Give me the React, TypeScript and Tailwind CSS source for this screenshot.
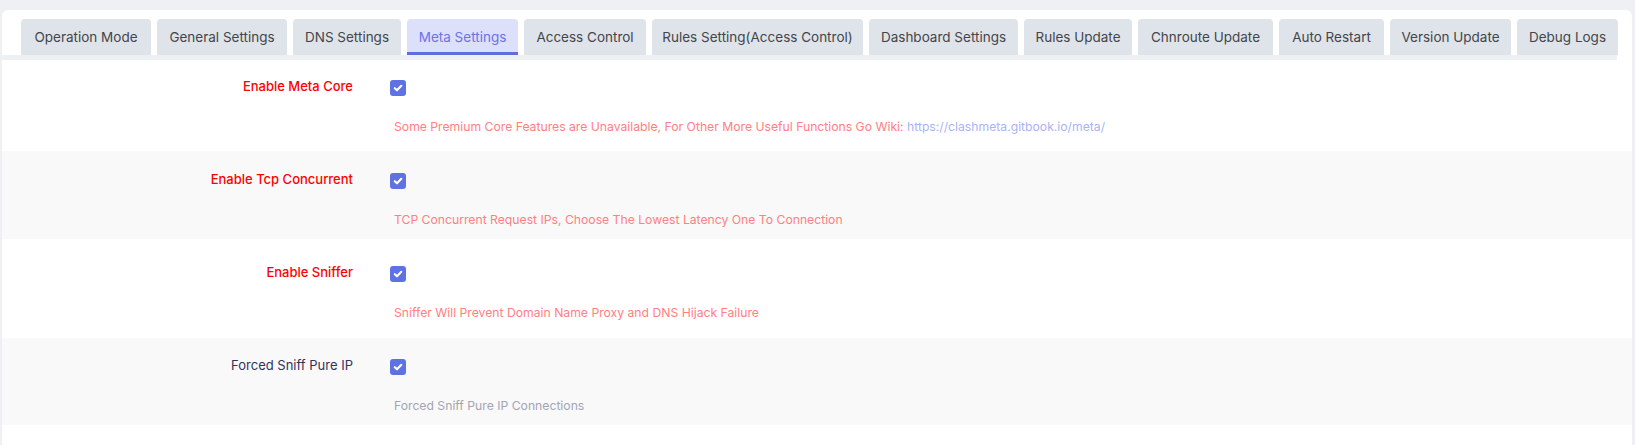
import React from 'react';

const tabs = [
  { name: 'Operation Mode', w: 'w-[130px]' },
  { name: 'General Settings', w: 'w-[130px]' },
  { name: 'DNS Settings', w: 'w-[108px]' },
  { name: 'Meta Settings', w: 'w-[111px]' },
  { name: 'Access Control', w: 'w-[122px]' },
  { name: 'Rules Setting(Access Control)', w: 'w-[211px]' },
  { name: 'Dashboard Settings', w: 'w-[149px]' },
  { name: 'Rules Update', w: 'w-[108px]' },
  { name: 'Chnroute Update', w: 'w-[135px]' },
  { name: 'Auto Restart', w: 'w-[105px]' },
  { name: 'Version Update', w: 'w-[121px]' },
  { name: 'Debug Logs', w: 'w-[101px]' },
];

function Check() {
  return (
    <span className="flex h-[16px] w-[16px] items-center justify-center rounded-[3px] bg-[#5e72e4]">
      <svg width="10" height="10" viewBox="0 0 10 10" fill="none">
        <path d="M1.8 5.2 L4 7.3 L8.3 2.8" stroke="white" strokeWidth="2.1" strokeLinecap="round" strokeLinejoin="round" />
      </svg>
    </span>
  );
}

type RowProps = {
  label: string;
  warn?: boolean;
  shade?: boolean;
  pad: string;
  children: React.ReactNode;
};

function Row({ label, warn, shade, pad, children }: RowProps) {
  return (
    <div className={`flex ${pad} ${shade ? 'bg-[#f9f9f9]' : 'bg-white'}`}>
      <div
        className={`-mt-[4px] w-[351px] shrink-0 text-right text-[13px] leading-5 ${
          warn ? 'font-medium text-[#ff0000]' : 'text-[#32325d]'
        }`}
      >
        {label}
      </div>
      <div className="pl-[37px]">
        <Check />
        <div className="mt-[22px] pl-[4px] text-[12.2px] leading-[18px]">{children}</div>
      </div>
    </div>
  );
}

export default function App() {
  return (
    <div className="min-h-[445px] bg-[#eff0f3] pl-[2px] pr-[3px] pt-[10px]" style={{ fontFamily: 'Inter, "Open Sans", sans-serif' }}>
      <div className="min-h-[435px] rounded-t-[6px] bg-white pt-[9px]">
        <div className="mr-[15px] border-b-[5px] border-[#eef1f4] pl-[19px]">
          <div className="flex gap-[6px]">
            {tabs.map((t) =>
              t.name === 'Meta Settings' ? (
                <div
                  key={t.name}
                  className={`flex h-[36px] shrink-0 items-center justify-center whitespace-nowrap rounded-t-[4px] border-b-[3px] border-[#5e6fe0] bg-[#dde0fb] pt-[3px] text-[13.5px] text-[#6b73e8] ${t.w}`}
                >
                  {t.name}
                </div>
              ) : (
                <div
                  key={t.name}
                  className={`flex h-[36px] shrink-0 items-center justify-center whitespace-nowrap rounded-t-[4px] bg-[#dfe4ea] text-[13.5px] text-[#44444c] ${t.w}`}
                >
                  {t.name}
                </div>
              ),
            )}
          </div>
        </div>

        <Row label="Enable Meta Core" warn pad="pt-[20px] pb-[15px]">
          <span className="text-[#ff8080]">
            Some Premium Core Features are Unavailable, For Other More Useful Functions Go Wiki:{' '}
          </span>
          <a className="text-[#aab3f3]">https://clashmeta.gitbook.io/meta/</a>
        </Row>
        <Row label="Enable Tcp Concurrent" warn shade pad="pt-[22px] pb-[10px]">
          <span className="text-[#ff8080]">TCP Concurrent Request IPs, Choose The Lowest Latency One To Connection</span>
        </Row>
        <Row label="Enable Sniffer" warn pad="pt-[27px] pb-[16px]">
          <span className="text-[#ff8080]">Sniffer Will Prevent Domain Name Proxy and DNS Hijack Failure</span>
        </Row>
        <Row label="Forced Sniff Pure IP" shade pad="pt-[21px] pb-[10px]">
          <span className="text-[#a3a4b4]">Forced Sniff Pure IP Connections</span>
        </Row>
      </div>
    </div>
  );
}
